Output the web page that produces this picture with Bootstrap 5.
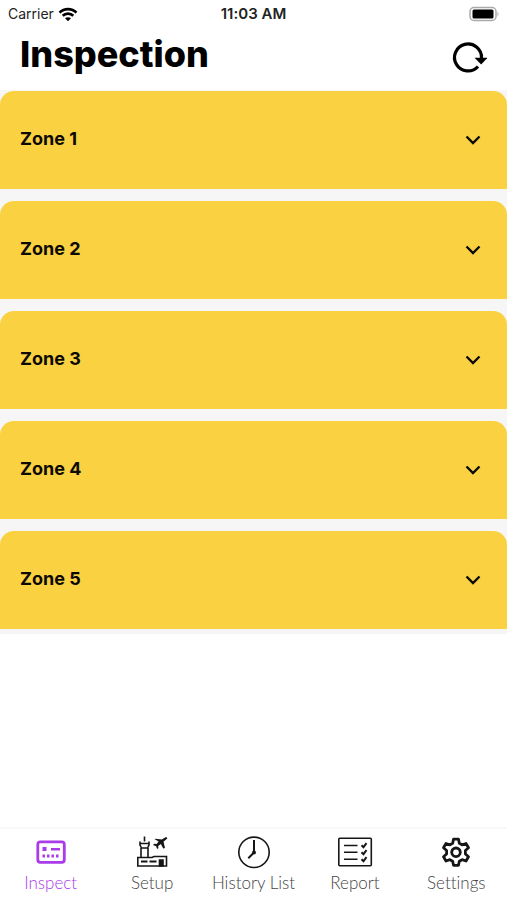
<!DOCTYPE html>
<html lang="en">
<head>
<meta charset="utf-8">
<meta name="viewport" content="width=device-width, initial-scale=1">
<title>Inspection</title>
<link href="https://cdn.jsdelivr.net/npm/bootstrap@5.3.0/dist/css/bootstrap.min.css" rel="stylesheet">
<style>
  body { font-family: Lato, sans-serif; font-variant-ligatures: none; color: #000; background: #fff; }
  .status-bar { height: 28px; padding: 0 8px; font-family: Inter, sans-serif; font-size: 14px; line-height: 28px; color: #222; }
  .status-bar .side { flex: 1 1 0; }
  .status-time { font-size: 15px; font-weight: 600; }
  .page-head { height: 62px; padding: 0 20px; }
  .page-title { font-family: Inter, sans-serif; font-size: 36px; line-height: 52px; font-weight: 800; }
  .zones { background: #f6f6f7; gap: 12px; padding: 1px 0 5px; }
  .zone { height: 98px; padding: 0 26px 0 20px; background: #fad141; border: 0; border-radius: 14px 14px 0 0; font-family: Inter, sans-serif; font-size: 18px; line-height: 24px; font-weight: 700; color: #0c0a02; }
  .zone span { padding-bottom: 2px; }
  .tab-bar { height: 73px; border-top: 2px solid #f8f8f8; background: #fff; }
  .tab { flex: 1 1 0; padding-top: 5px; color: #444; font-size: 17px; line-height: 24px; font-weight: 300; white-space: nowrap; }
  .tab svg { color: #161616; margin-bottom: 1px; }
  .tab.active, .tab.active svg { color: #a93be8; }
</style>
<script src="https://cdn.jsdelivr.net/npm/bootstrap@5.3.0/dist/js/bootstrap.bundle.min.js"></script>
</head>
<body class="d-flex flex-column min-vh-100">
  <div class="status-bar d-flex align-items-center">
    <div class="side d-flex align-items-center gap-1">
      <span>Carrier</span>
      <svg width="20" height="15" viewBox="0 0 20 15" fill="none" stroke="#000" stroke-width="2.600" aria-hidden="true"><path d="M1.500 5.600C6.200 .9 13.800 .9 18.500 5.600M4.700 8.800C7.700 5.900 12.300 5.900 15.300 8.800"/><path d="M10 14.300 7 11.300C8.700 9.800 11.300 9.800 13 11.300Z" fill="#000" stroke="none"/></svg>
    </div>
    <span class="status-time">11:03 AM</span>
    <div class="side d-flex justify-content-end">
      <svg width="31" height="16" viewBox="0 0 31 16" aria-hidden="true"><rect x="2" y="1.500" width="26" height="13" rx="4" fill="#fff" stroke="#aaa" stroke-width="1.500"/><rect x="4.500" y="3.500" width="21" height="9" rx="1.500"/><path d="M29.500 5.500q2 2.500 0 5z" fill="#aaa"/></svg>
    </div>
  </div>
  <header class="page-head d-flex justify-content-between align-items-start">
    <h1 class="page-title mb-0">Inspection</h1>
    <button class="btn p-0 border-0 mt-2" type="button" aria-label="Refresh">
      <svg class="d-block" width="36" height="40" viewBox="0 0 36 40" aria-hidden="true"><path d="M27 30.500A13.500 13.500 0 1 1 30.500 22" fill="none" stroke="#000" stroke-width="3.200"/><path d="M23.500 21.800H36.500L30.200 28.500Z"/></svg>
    </button>
  </header>
  <main class="flex-grow-1">
    <div class="zones d-flex flex-column">
      <button class="zone w-100 d-flex align-items-center justify-content-between" type="button"><span>Zone 1</span><svg width="16" height="10" viewBox="0 0 16 10" fill="none" stroke="currentColor" stroke-width="2.400" aria-hidden="true"><path d="m1.500 1.500 6.500 6.500 6.500-6.500"/></svg></button>
      <button class="zone w-100 d-flex align-items-center justify-content-between" type="button"><span>Zone 2</span><svg width="16" height="10" viewBox="0 0 16 10" fill="none" stroke="currentColor" stroke-width="2.400" aria-hidden="true"><path d="m1.500 1.500 6.500 6.500 6.500-6.500"/></svg></button>
      <button class="zone w-100 d-flex align-items-center justify-content-between" type="button"><span>Zone 3</span><svg width="16" height="10" viewBox="0 0 16 10" fill="none" stroke="currentColor" stroke-width="2.400" aria-hidden="true"><path d="m1.500 1.500 6.500 6.500 6.500-6.500"/></svg></button>
      <button class="zone w-100 d-flex align-items-center justify-content-between" type="button"><span>Zone 4</span><svg width="16" height="10" viewBox="0 0 16 10" fill="none" stroke="currentColor" stroke-width="2.400" aria-hidden="true"><path d="m1.500 1.500 6.500 6.500 6.500-6.500"/></svg></button>
      <button class="zone w-100 d-flex align-items-center justify-content-between" type="button"><span>Zone 5</span><svg width="16" height="10" viewBox="0 0 16 10" fill="none" stroke="currentColor" stroke-width="2.400" aria-hidden="true"><path d="m1.500 1.500 6.500 6.500 6.500-6.500"/></svg></button>
    </div>
  </main>
  <nav class="tab-bar d-flex sticky-bottom" aria-label="Main">
    <a href="#inspect" class="tab active d-flex flex-column align-items-center text-decoration-none" aria-current="page">
      <svg width="36" height="36" viewBox="0 0 36 36" aria-hidden="true"><rect x="4.800" y="7.800" width="26.500" height="20.500" rx="2.500" fill="none" stroke="currentColor" stroke-width="2.800"/><path d="M9.500 13h4v4h-4zM18 14h9v2.500h-9zM9.500 20.500H12v3H9.500zM14 20.500h2.500v3H14zM18.500 20.500H21v3h-2.500zM23 20.500h2.500v3H23z" fill="currentColor"/></svg>
      <span>Inspect</span>
    </a>
    <a href="#setup" class="tab d-flex flex-column align-items-center text-decoration-none">
      <svg width="36" height="36" viewBox="0 0 36 36" fill="none" stroke="currentColor" stroke-width="1.600" aria-hidden="true"><path d="M10.500 2.500V7.500M6 7.500v3.500l1.500 3h6l1.500-3V7.500M6 9.500h9M7 14v9.500M14 14v9.500M3.800 23.500h14.200l2-1H32.500V32H3.800z"/><path d="M7 27.500h6.500M15.500 27.500h7" stroke-width="2.200"/><path d="M25.500 26H29V32h-3.500z" fill="currentColor"/><path d="M33.500 4.300 29.500 7.700 31 14l-1.800.5-2.300-4.500-2.700 2 .2 2.300-1.300.7-1-2.800-3-1.200 1-1.200 2.500.1 2-2.400-4.200-2.400L21.500 4.700 27.800 5.600 32 2.900z" fill="currentColor" stroke="none"/></svg>
      <span>Setup</span>
    </a>
    <a href="#history" class="tab d-flex flex-column align-items-center text-decoration-none">
      <svg width="36" height="36" viewBox="0 0 36 36" fill="none" stroke="currentColor" stroke-width="1.600" aria-hidden="true"><circle cx="18" cy="18.300" r="15.200"/><path d="M18 18.500V6M18 18.500 12.300 24.300" stroke-width="2"/><circle cx="18" cy="18.500" r="2" fill="currentColor" stroke="none"/></svg>
      <span>History List</span>
    </a>
    <a href="#report" class="tab d-flex flex-column align-items-center text-decoration-none">
      <svg width="36" height="36" viewBox="0 0 36 36" fill="none" stroke="currentColor" stroke-width="1.600" aria-hidden="true"><rect x="1.800" y="4.200" width="32.500" height="27.500" rx="1"/><path d="M7 11.500h13.500M7 18.300h13.500M7 25.200h13.500"/><path d="M24.500 11.200l2 2 3-4M24.500 18.200l2 2 3-4M24.500 25.200l2 2 3-4" stroke-width="2"/></svg>
      <span>Report</span>
    </a>
    <a href="#settings" class="tab d-flex flex-column align-items-center text-decoration-none">
      <svg width="36" height="36" viewBox="0 0 36 36" fill="none" stroke="currentColor" stroke-width="2.800" stroke-linejoin="round" aria-hidden="true"><path d="M15.500 5.200h5l.8 4 2.800 1.600 3.900-1.300 2.500 4.300-3.100 2.700v3.500l3.100 2.700-2.500 4.300-3.900-1.300-2.800 1.600-.8 4h-5l-.8-4-2.800-1.600L8 27l-2.500-4.300L8.600 20v-3.500l-3.100-2.700L8 9.500l3.900 1.300 2.800-1.600z"/><circle cx="18" cy="18.300" r="4.300"/></svg>
      <span>Settings</span>
    </a>
  </nav>
</body>
</html>
